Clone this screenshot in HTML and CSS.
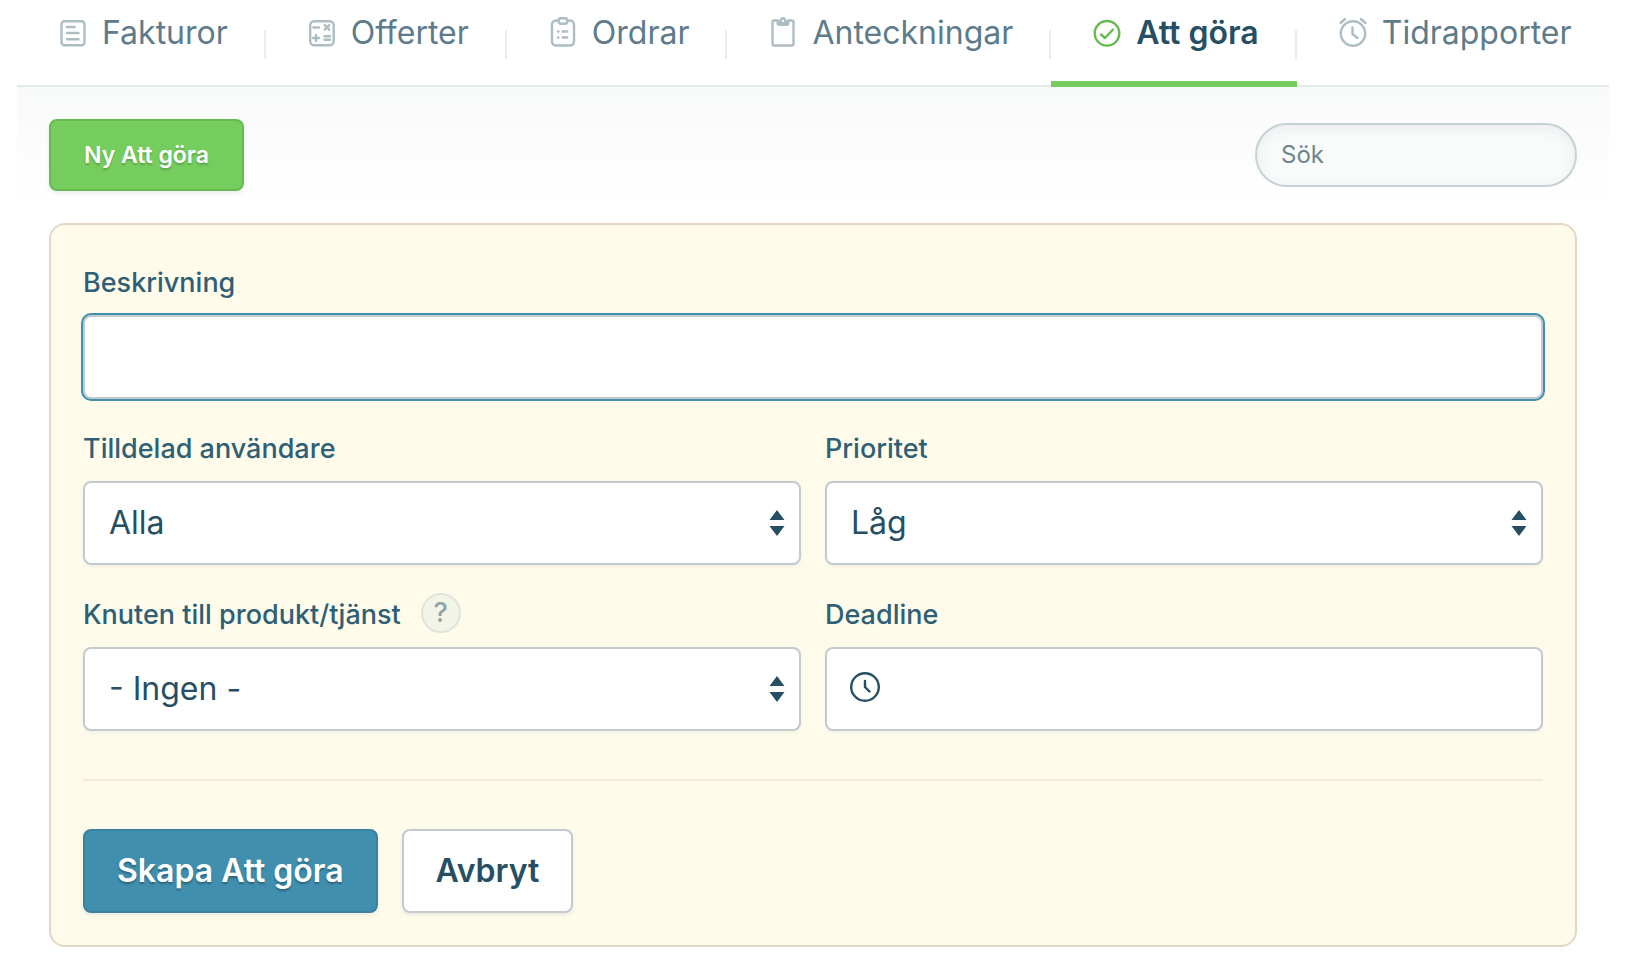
FILE: index.html
```html
<!DOCTYPE html>
<html lang="sv">
<head>
<meta charset="utf-8">
<meta name="viewport" content="width=device-width, initial-scale=1">
<title>Att göra</title>
<link rel="stylesheet" href="styles.css">
</head>
<body>
<div class="page">
  <nav class="tabs" aria-label="Flikar">
    <a class="tab" href="#fakturor">
      <svg class="tab-icon" viewBox="0 0 32 32" aria-hidden="true"><rect x="4.500" y="4.200" width="23" height="24" rx="3"/><path d="M10 10h7.500M10 16h11.500M10 22.200h11.500"/></svg>
      <span>Fakturor</span>
    </a>
    <a class="tab" href="#offerter">
      <svg class="tab-icon" viewBox="0 0 32 32" aria-hidden="true"><rect x="4.200" y="4.200" width="23.500" height="24" rx="4"/><path d="M7.500 10.500h5.500M18.800 8.200l4.500 4.500M23.300 8.200l-4.500 4.500M7 21h6M10 18v6M18.500 19.300h5.500M18.500 22.700h5.500"/></svg>
      <span>Offerter</span>
    </a>
    <a class="tab" href="#ordrar">
      <svg class="tab-icon" viewBox="0 0 32 32" aria-hidden="true"><path d="M11 3.500H9a4 4 0 0 0-4 4v17a4 4 0 0 0 4 4h14a4 4 0 0 0 4-4V7.500a4 4 0 0 0-4-4h-2"/><rect x="11.500" y="1.200" width="9" height="5.600" rx="2.800"/><path d="M11 14.500h.4M15.800 14.500h4.400M11 20.500h.4M15.800 20.500h4.400"/></svg>
      <span>Ordrar</span>
    </a>
    <a class="tab" href="#anteckningar">
      <svg class="tab-icon" viewBox="0 0 32 32" aria-hidden="true"><path d="M11 3.500H7a1.500 1.500 0 0 0-1.500 1.500v22A1.500 1.500 0 0 0 7 28.500h18a1.500 1.500 0 0 0 1.500-1.500V5A1.500 1.500 0 0 0 25 3.500h-4"/><path class="solid" fill-rule="evenodd" d="M9.500 3h3.500a3 3 0 0 1 6 0h3.500v3a3 3 0 0 1-3 3h-7a3 3 0 0 1-3-3zM16 2.700a1.200 1.200 0 1 0 .01 0z"/></svg>
      <span>Anteckningar</span>
    </a>
    <a class="tab tab-active" href="#att-gora" aria-current="page">
      <svg class="tab-icon" viewBox="0 0 32 32" aria-hidden="true"><circle cx="16" cy="16.300" r="12.300"/><path d="M10 17.500l4 3.500L22 12.500"/></svg>
      <span>Att göra</span>
    </a>
    <a class="tab" href="#tidrapporter">
      <svg class="tab-icon" viewBox="0 0 32 32" aria-hidden="true"><circle cx="16" cy="16.500" r="12.200"/><path d="M15.500 10.500v6.500l5 4M3.500 6l4.500-4M28.500 6l-4.500-4"/></svg>
      <span>Tidrapporter</span>
    </a>
  </nav>

  <main class="content">
    <div class="toolbar">
      <button class="btn btn-new" type="button">Ny Att göra</button>
      <input class="search" type="search" placeholder="Sök" aria-label="Sök">
    </div>

    <form class="card">
      <div class="fields">
        <div class="field field-wide">
          <div class="label-row"><label for="desc">Beskrivning</label></div>
          <input class="control control-focused" id="desc" type="text">
        </div>
        <div class="field">
          <div class="label-row"><label for="user">Tilldelad användare</label></div>
          <div class="select-wrap">
            <select class="control" id="user"><option>Alla</option></select>
            <svg class="arrows" viewBox="0 0 16 26" aria-hidden="true"><path d="M8 0l7.500 10H.5zM.5 16h15L8 26z"/></svg>
          </div>
        </div>
        <div class="field">
          <div class="label-row"><label for="prio">Prioritet</label></div>
          <div class="select-wrap">
            <select class="control" id="prio"><option>Låg</option></select>
            <svg class="arrows" viewBox="0 0 16 26" aria-hidden="true"><path d="M8 0l7.500 10H.5zM.5 16h15L8 26z"/></svg>
          </div>
        </div>
        <div class="field">
          <div class="label-row"><label for="product">Knuten till produkt/tjänst</label><button class="help" type="button" aria-label="Hjälp">?</button></div>
          <div class="select-wrap">
            <select class="control" id="product"><option>- Ingen -</option></select>
            <svg class="arrows" viewBox="0 0 16 26" aria-hidden="true"><path d="M8 0l7.500 10H.5zM.5 16h15L8 26z"/></svg>
          </div>
        </div>
        <div class="field">
          <div class="label-row"><label for="deadline">Deadline</label></div>
          <div class="select-wrap">
            <input class="control control-date" id="deadline" type="text">
            <svg class="clock" viewBox="0 0 30 30" aria-hidden="true"><circle cx="15" cy="15" r="13.800"/><path d="M15 9v6l4.500 4.500"/></svg>
          </div>
        </div>
      </div>
      <div class="actions">
        <button class="btn btn-primary" type="submit">Skapa Att göra</button>
        <button class="btn btn-plain" type="button">Avbryt</button>
      </div>
    </form>
  </main>
</div>
</body>
</html>
```
FILE: styles.css
```css
* { box-sizing: border-box; }

body {
  margin: 0;
  background: #fff;
  color: #264f63;
  font-family: Inter, "Liberation Sans", sans-serif;
  font-size: 32px;
}

button, input, select { font: inherit; color: inherit; }

.page { margin: 0 19px 0 17px; }

.tabs {
  display: flex;
  height: 87px;
  border-bottom: 2px solid #e3eaec;
}

.tab {
  position: relative;
  display: flex;
  flex: none;
  align-items: center;
  gap: 13px;
  height: 87px;
  padding: 0 38px 22px 40px;
  color: #5d7b8b;
  line-height: 40px;
  text-decoration: none;
}

.tab:not(:last-child)::after {
  content: "";
  position: absolute;
  right: 0;
  top: 30px;
  width: 2px;
  height: 29px;
  background: #e8eeef;
}

.tab-icon {
  width: 32px;
  height: 32px;
  overflow: visible;
  fill: none;
  stroke: #adbdc4;
  stroke-width: 2.4;
  stroke-linecap: round;
  stroke-linejoin: round;
}

.tab-icon .solid { fill: #adbdc4; stroke: none; }

.tab-active {
  border-bottom: 6px solid #75cd5d;
  padding-bottom: 16px;
  color: #264f63;
  font-weight: 600;
}

.tab-active .tab-icon { stroke: #66b94f; }

.content {
  padding: 32px 32px 20px;
  background: linear-gradient(#f8faf9, #fff 124px);
}

.toolbar {
  display: flex;
  align-items: center;
  justify-content: space-between;
  margin-bottom: 32px;
}

.btn {
  border: 2px solid;
  border-radius: 8px;
  font-weight: 600;
  cursor: pointer;
  box-shadow: 0 2px 4px rgba(38, 79, 99, 0.1);
}

.btn-new {
  height: 72px;
  padding: 0 33px;
  border-color: #68b951;
  background: #75cd5d;
  color: #fff;
  font-size: 23px;
  text-shadow: 0 2px 2px rgba(0, 0, 0, 0.2);
}

.search {
  width: 322px;
  height: 64px;
  padding: 0 24px 2px;
  border: 2px solid #c5d2d5;
  border-radius: 32px;
  background: #f9fbfa;
  box-shadow: inset 0 4px 12px rgba(38, 79, 99, 0.08);
  font-size: 24px;
  appearance: none;
}

.search::placeholder { color: #6c858e; opacity: 1; }

.card {
  padding: 40px 32px 32px;
  border: 2px solid #e4d7c5;
  border-radius: 16px;
  background: #fffbeb;
}

.fields {
  display: grid;
  grid-template-columns: 1fr 1fr;
  gap: 32px 24px;
}

.field { min-width: 0; }
.field-wide { grid-column: 1 / -1; }

.label-row {
  display: flex;
  align-items: center;
  gap: 20px;
  height: 36px;
  margin-bottom: 14px;
  color: #2e5f75;
  font-size: 27px;
  font-weight: 500;
  line-height: 36px;
}

.help {
  width: 40px;
  height: 40px;
  margin-top: -4px;
  padding: 0;
  border: 2px solid #e0e4da;
  border-radius: 50%;
  background: #f3f4e8;
  color: #8ca3aa;
  font-weight: 500;
  line-height: 36px;
}

.control {
  display: block;
  width: 100%;
  height: 84px;
  padding: 0 24px 2px;
  border: 2px solid #c2cacf;
  border-radius: 8px;
  background: #fff;
  box-shadow: 0 2px 4px rgba(38, 79, 99, 0.06);
  outline: none;
  appearance: none;
}

.control-focused { box-shadow: 0 0 0 2px #408fae; }
.control-date { padding-left: 68px; }

.select-wrap { position: relative; }

.arrows {
  position: absolute;
  right: 16px;
  top: 29px;
  width: 16px;
  height: 26px;
  fill: #264f63;
  pointer-events: none;
}

.clock {
  position: absolute;
  left: 25px;
  top: 25px;
  width: 30px;
  height: 30px;
  fill: none;
  stroke: #264f63;
  stroke-width: 2.4;
  stroke-linecap: round;
}

.actions {
  display: flex;
  gap: 24px;
  margin-top: 48px;
  padding-top: 48px;
  border-top: 2px solid #f1e9dc;
}

.btn-primary,
.btn-plain { height: 84px; padding: 0 32px 2px; }

.btn-primary {
  border-color: #3b82a0;
  background: #408fae;
  color: #fff;
  text-shadow: 0 2px 2px rgba(0, 0, 0, 0.3);
}

.btn-plain {
  border-color: #c2cacf;
  background: #fff;
}
```
